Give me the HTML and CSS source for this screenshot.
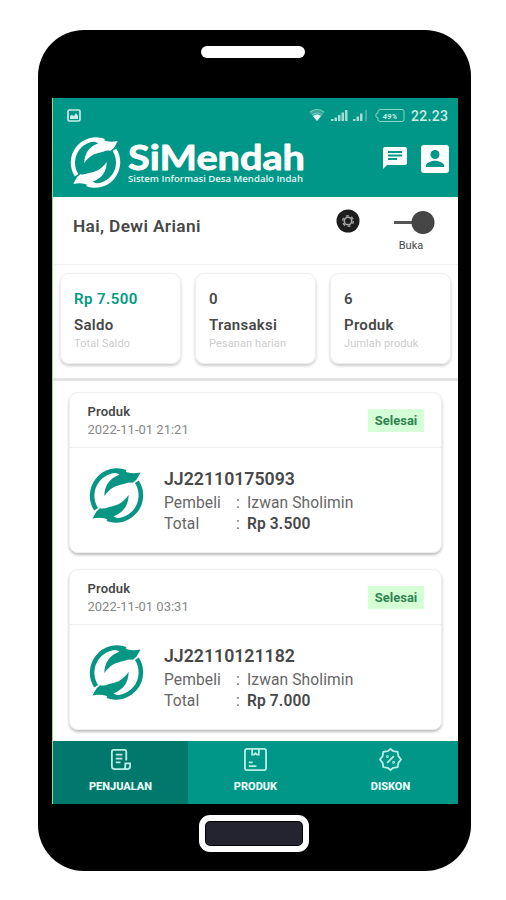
FILE: index.html
```html
<!DOCTYPE html>
<html lang="id">
<head>
<meta charset="utf-8">
<title>SiMendah</title>
<link rel="stylesheet" href="styles.css">
</head>
<body>
<svg class="defs" width="0" height="0" aria-hidden="true">
  <symbol id="emblem" viewBox="0 0 54 54">
    <g id="leaf">
      <path d="M7 40.500A24.600 24.600 0 0 1 36 4" fill="none" stroke="currentColor" stroke-width="4.500"/>
      <path d="M24 1.500Q31 0 38 4.300Q44 5.800 50.500 4.300Q49.500 6.500 48.300 8.500Q47 12 43 14.500Q39 13.800 35 15.500Q30 16.500 25 18.500Q20 21 15 27.500C15.500 17 20 10.500 30 6.500L24 4Z" fill="currentColor"/>
    </g>
    <use href="#leaf" transform="rotate(180 27 27)"/>
  </symbol>
</svg>
<main class="phone">
  <div class="speaker"></div>
  <section class="screen">
    <header class="header">
      <div class="status">
        <svg class="photo" viewBox="0 0 14 13"><rect x="1" y="1" width="12" height="11" rx="1.500" fill="none" stroke="currentColor" stroke-width="1.700"/><path d="M3 10V7l2-1 2 1 2-3 2 3v3z" fill="currentColor"/></svg>
        <svg class="signals" viewBox="0 0 96 15">
          <path d="M0 4Q8-2 16 4L8 13Z" fill="#37a99c"/><path d="M1 4Q8-1 15 4M3 7Q8 3 13 7" fill="none" stroke="#7ccac1"/><path d="M4 8Q8 5 12 8L8 13Z" fill="#e4f7f4"/>
          <path d="M22 11h2.500v2H22zM25.500 9.500H28V13h-2.500zM29 7h2.500v6H29zM32.500 4.500H35V13h-2.500zM36 2h2.500v11H36zM44 11h2.500v2H44zM47.500 8.500H50V13h-2.500zM51 5.500h2.500V13H51z" fill="#a4dbd4"/>
          <path d="M56 2h2v11h-2z" fill="#46aea3"/>
          <path d="M71 1.500h22q2 0 2 2v8q0 2-2 2H71q-2 0-2-2V10l-2-1V6l2-1V3.500q0-2 2-2z" fill="none" stroke="#8dd2ca"/>
          <text x="73.500" y="10.500" class="charge">49%</text>
        </svg>
        <span class="clock">22.23</span>
      </div>
      <div class="brandbar">
        <svg class="brandmark"><use href="#emblem"/></svg>
        <div class="wordmark">
          <svg class="name" viewBox="0 0 178 30"><text x="0" y="26.500" textLength="177" lengthAdjust="spacingAndGlyphs">SiMendah</text></svg>
          <svg class="tagline" viewBox="0 0 178 12"><text x="0" y="9" textLength="175" lengthAdjust="spacingAndGlyphs">Sistem Informasi Desa Mendalo Indah</text></svg>
        </div>
        <svg class="chat" viewBox="0 0 24 24"><path fill="currentColor" fill-rule="evenodd" d="M2 1h20q2 0 2 2v14q0 2-2 2H4l-4 4V3q0-2 2-2zM5 5v2h14V5zM5 8.500v2h14v-2zM5 12v2h9v-2z"/></svg>
        <svg class="account" viewBox="0 0 28 28"><rect width="28" height="28" rx="3" fill="currentColor"/><circle cx="14" cy="9.500" r="4.500" fill="#009688"/><path d="M5 22v-1.500c0-3 6-4.800 9-4.800s9 1.800 9 4.800V22z" fill="#009688"/></svg>
      </div>
    </header>
    <div class="greeting">
      <h1>Hai, Dewi Ariani</h1>
      <svg class="gear" viewBox="0 0 24 24"><circle cx="12" cy="12" r="11.500" fill="#1d1d1d"/><circle cx="12" cy="12" r="3.700" fill="none" stroke="#aaa" stroke-width="1.500"/><circle cx="12" cy="12" r="5.300" fill="none" stroke="#999" stroke-width="1.600" stroke-dasharray="2.900 2.650"/></svg>
      <div class="toggle"><div class="switch"></div><span>Buka</span></div>
    </div>
    <div class="stats">
      <div class="stat"><b class="money">Rp 7.500</b><b>Saldo</b><small>Total Saldo</small></div>
      <div class="stat"><b>0</b><b>Transaksi</b><small>Pesanan harian</small></div>
      <div class="stat"><b>6</b><b>Produk</b><small>Jumlah produk</small></div>
    </div>
    <div class="orders">
      <article class="order">
        <div class="order-head"><div><strong>Produk</strong><time>2022-11-01 21:21</time></div><span class="badge">Selesai</span></div>
        <div class="order-body"><svg class="emblem"><use href="#emblem"/></svg>
          <div class="info"><h2>JJ22110175093</h2><p><span>Pembeli</span><i>:</i><span>Izwan Sholimin</span></p><p><span>Total</span><i>:</i><b>Rp 3.500</b></p></div></div>
      </article>
      <article class="order">
        <div class="order-head"><div><strong>Produk</strong><time>2022-11-01 03:31</time></div><span class="badge">Selesai</span></div>
        <div class="order-body"><svg class="emblem"><use href="#emblem"/></svg>
          <div class="info"><h2>JJ22110121182</h2><p><span>Pembeli</span><i>:</i><span>Izwan Sholimin</span></p><p><span>Total</span><i>:</i><b>Rp 7.000</b></p></div></div>
      </article>
    </div>
    <nav class="tabs">
      <a class="active"><svg viewBox="0 0 24 24"><path d="M18 13V4q0-2-2-2H5Q3 2 3 4v15q0 3 3 3h13q3 0 3-3v-3h-5v3q0 3-2 3M7 7h7M7 11h7M7 15h5"/></svg><span>PENJUALAN</span></a>
      <a><svg viewBox="0 0 24 24"><path d="M3 1h18q2 0 2 2v18q0 2-2 2H3q-2 0-2-2V3q0-2 2-2zM8.500 1v6h2l1.500-1.500L13.500 7h2V1M5 15h4M5 19h8"/></svg><span>PRODUK</span></a>
      <a><svg viewBox="0 0 24 24"><path stroke-linejoin="round" d="M12 1l3 2.300 4.500.7.700 4.500L23 12l-2.800 3.500-.7 4.500-4.500.7L12 23l-3-2.300-4.500-.7-.7-4.500L1 12l2.800-3.500.7-4.500L9 3.300zM8.500 15.500l7-7"/><circle cx="8.800" cy="9" r=".5"/><circle cx="15.200" cy="15" r=".5"/></svg><span>DISKON</span></a>
    </nav>
  </section>
  <div class="home"></div>
</main>
</body>
</html>
```
FILE: styles.css
```css
* { box-sizing: border-box; }
body { margin: 0; height: 900px; background: #fff; font-family: Roboto, sans-serif; color: #484848; overflow: hidden; }
h1, h2, p { margin: 0; }
svg { display: block; flex: none; }
.defs { position: absolute; }
.phone { width: 433px; height: 841px; margin: 30px 0 0 38px; background: #000; border-radius: 46px; display: flex; flex-direction: column; align-items: center; padding-top: 16px; overflow: hidden; float: left; }
.speaker { width: 104px; height: 12px; border-radius: 6px; background: #fff; flex: none; margin-right: 3px; }
.screen { width: 406px; height: 706px; margin: 40px 0 0 14px; align-self: flex-start; background: #fff; display: flex; flex-direction: column; flex: none; border-left: 1px solid #9bdc8c; overflow: hidden; }
.home { width: 110px; height: 37px; margin: 11px 2px 0 0; background: #242330; border: 6px solid #fff; border-radius: 11px; box-shadow: inset 0 0 0 1px #000; flex: none; }
.header { height: 99px; background: #009688; color: #fff; flex: none; }
.status { height: 35px; display: flex; align-items: center; padding: 0 8px 0 14px; color: #c9ece7; }
.photo { width: 14px; height: 13px; }
.signals { width: 96px; height: 15px; margin-left: auto; }
.charge { font: italic 700 8px Roboto, sans-serif; fill: #c5ebe6; }
.clock { font-size: 14px; font-weight: 500; margin-left: 6px; width: 39px; letter-spacing: .3px; white-space: nowrap; }
.brandbar { display: flex; padding-left: 17px; }
.brandmark { width: 51px; height: 51px; margin-top: 4px; color: #fff; }
.wordmark { width: 178px; margin: 10px 0 0 7px; }
.name { width: 178px; height: 30px; overflow: visible; font: 700 34px Lato, sans-serif; fill: #fff; stroke: #fff; stroke-width: .8px; stroke-linejoin: round; }
.tagline { width: 178px; height: 12px; font: 600 9px "Open Sans", sans-serif; fill: #e2f6f3; overflow: visible; }
.chat { width: 24px; height: 24px; margin: 13px 0 0 77px; }
.account { width: 28px; height: 28px; margin: 12px 0 0 14px; }
.greeting { height: 68px; border-bottom: 1px solid #f0f0f0; display: flex; padding-left: 20px; flex: none; }
h1 { font-size: 17.300px; font-weight: 600; line-height: 20px; letter-spacing: .35px; margin-top: 19px; width: 263px; white-space: nowrap; }
.gear { width: 24px; height: 24px; margin-top: 12px; }
.toggle { width: 42px; margin: 14px 0 0 33px; font-size: 11px; display: flex; flex-direction: column; align-items: center; }
.switch { width: 42px; height: 23px; background: radial-gradient(circle at 30px 11.500px, #454545 11px, transparent 12px), linear-gradient(#555, #555) 1px 10px / 22px 3px no-repeat; }
.toggle span { line-height: 14px; margin: 5px 6px 0 0; }
.stats { height: 116px; display: grid; grid-template-columns: repeat(3, 121px); gap: 14px; padding: 8px 0 0 7px; border-bottom: 3px solid #e2e2e2; flex: none; }
.stat { height: 91px; border-radius: 9px; border: 1px solid #eee; box-shadow: 0 2px 3px #ccc; padding: 12px 0 0 13px; display: flex; flex-direction: column; }
.stat b { font-size: 15px; font-weight: 600; line-height: 26px; letter-spacing: .28px; white-space: nowrap; }
.stat .money { color: #009b83; letter-spacing: .45px; }
.stat small { font-size: 11px; line-height: 12px; letter-spacing: .1px; color: #ccc; }
.orders { padding: 11px 16px 0 16px; display: flex; flex-direction: column; gap: 16px; height: 360px; flex: none; }
.order { height: 161px; border: 1px solid #eee; border-radius: 9px; box-shadow: 0 2px 3px #bbb; flex: none; }
.order-head { height: 55px; border-bottom: 1px solid #eee; display: flex; justify-content: space-between; padding: 10px 17px 0 18px; }
.order-head div { margin-left: -.5px; }
.order-head strong, .order-head time { display: block; line-height: 18px; }
.order-head strong { font-size: 13px; font-weight: 600; letter-spacing: .2px; }
.order-head time { font-size: 13px; color: #888; }
.badge { width: 56px; height: 23px; margin-top: 6px; background: #d5ffd4; color: #318353; font-size: 13px; font-weight: 700; line-height: 23px; text-align: center; }
.order-body { display: flex; }
.emblem { width: 55px; height: 55px; margin: 20px 0 0 19px; color: #079584; }
.info { margin: 19px 0 0 20px; }
h2 { font-size: 17.700px; font-weight: 600; line-height: 25px; margin-bottom: 1px; }
.info p { display: flex; font-size: 15.600px; line-height: 20.500px; color: #666; letter-spacing: .1px; white-space: nowrap; }
.info p span:first-child { width: 72px; }
.info i { width: 11px; font-style: normal; }
.info b { font-weight: 600; color: #484848; }
.tabs { height: 64px; display: grid; grid-template-columns: 135px 135px 135px; background: #009688; color: #eafffc; flex: none; }
.tabs a { display: flex; flex-direction: column; align-items: center; padding-top: 7px; }
.tabs .active { background: #00786c; }
.tabs svg { width: 23px; height: 23px; fill: none; stroke: #b9eee7; stroke-width: 1.900; }
.tabs span { font-size: 11px; font-weight: 800; line-height: 14px; margin-top: 9px; }
```
